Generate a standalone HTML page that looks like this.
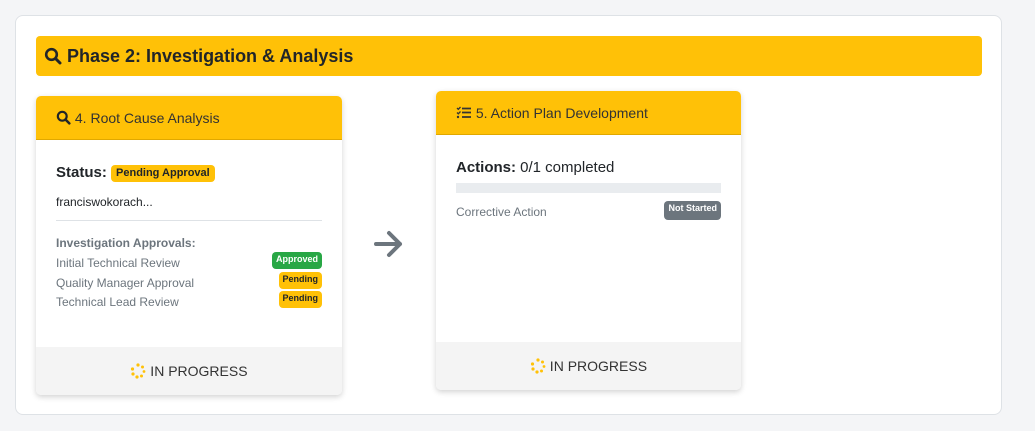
<!DOCTYPE html>
<html><head><style>
*{box-sizing:border-box;margin:0;padding:0}
body{width:1035px;height:431px;background:#f4f5f7;font-family:"Liberation Sans",sans-serif;color:#212529;position:relative;overflow:hidden}
.outer{position:absolute;left:15px;top:15px;width:987px;height:400px;background:#fff;border:1px solid #dee2e6;border-radius:8px}
.phase{position:absolute;left:36px;top:36px;width:946px;height:40px;background:#ffc107;border-radius:4px;font-weight:bold;font-size:18px;line-height:40px;padding-left:8px;color:#212529}
.card{position:absolute;background:#fff;border-radius:5px;box-shadow:0 2px 6px rgba(0,0,0,.18);overflow:hidden}
.hd{height:44px;background:#ffc107;font-size:14px;line-height:44px;padding-left:20px;color:#333;border-bottom:1px solid #e0a800}
.ft{position:absolute;left:0;right:0;bottom:0;height:48px;background:#f4f4f4;text-align:center;line-height:48px;font-size:14px;color:#333}
.badge{display:inline-block;border-radius:4px;font-weight:bold;font-size:10px;padding:2px 4px;color:#212529;background:#ffc107}
.row{position:absolute;left:20px;right:20px;font-size:12px;color:#6c757d}
.row .badge{position:absolute;right:0;top:-4px;font-size:9px;padding:2px 4px 5px}
.sp{vertical-align:-3px}
</style></head><body>
<div class="outer"></div>
<div class="phase"><svg width="18" height="18" viewBox="0 0 18 18" style="vertical-align:-3px"><circle cx="7.5" cy="7.5" r="5.3" fill="none" stroke="#212529" stroke-width="2.6"/><path d="M11.5 11.5L16 16" stroke="#212529" stroke-width="3" stroke-linecap="round"/></svg> Phase 2: Investigation &amp; Analysis</div>

<div class="card" style="left:36px;top:96px;width:306px;height:299px">
 <div class="hd"><svg width="15" height="15" viewBox="0 0 18 18" style="vertical-align:-2px"><circle cx="7.5" cy="7.5" r="5.3" fill="none" stroke="#212529" stroke-width="2.6"/><path d="M11.5 11.5L16 16" stroke="#212529" stroke-width="3" stroke-linecap="round"/></svg> 4. Root Cause Analysis</div>
 <div style="position:absolute;left:20px;top:68px;font-weight:bold;font-size:15px">Status: <span class="badge" style="font-size:11px;vertical-align:1px;padding:2px 5px 3px">Pending Approval</span></div>
 <div style="position:absolute;left:20px;top:99px;font-size:12px">franciswokorach...</div>
 <div style="position:absolute;left:20px;right:20px;top:124px;border-top:1px solid #dee2e6"></div>
 <div style="position:absolute;left:20px;top:140px;font-size:12px;font-weight:bold;color:#6c757d">Investigation Approvals:</div>
 <div class="row" style="top:160px">Initial Technical Review<span class="badge" style="background:#28a745;color:#fff">Approved</span></div>
 <div class="row" style="top:180px">Quality Manager Approval<span class="badge">Pending</span></div>
 <div class="row" style="top:199px">Technical Lead Review<span class="badge">Pending</span></div>
 <div class="ft"><svg class="sp" width="16" height="16" viewBox="0 0 16 16" fill="#ffc107"><circle cx="8" cy="2" r="1.6"/><circle cx="12.5" cy="4" r="1.5"/><circle cx="14" cy="8.5" r="1.4"/><circle cx="11.5" cy="13" r="1.5"/><circle cx="7" cy="14" r="1.6"/><circle cx="3" cy="11" r="1.6"/><circle cx="2.5" cy="6" r="1.6"/></svg> IN PROGRESS</div>
</div>

<svg style="position:absolute;left:374px;top:230px" width="30" height="28" viewBox="0 0 30 28"><path d="M2 14H26M15 3L26 14L15 25" fill="none" stroke="#6c757d" stroke-width="4" stroke-linecap="round" stroke-linejoin="round"/></svg>

<div class="card" style="left:436px;top:91px;width:305px;height:299px">
 <div class="hd"><svg width="16" height="13" viewBox="0 0 16 13" style="vertical-align:-1px"><path d="M1 2l1.3 1.3L4.5 1M1 6.5l1.3 1.3L4.5 5.5" fill="none" stroke="#333" stroke-width="1.3"/><circle cx="2" cy="11" r="1.2" fill="#333"/><path d="M6 2.5h9M6 6.5h9M6 11h9" stroke="#333" stroke-width="1.8"/></svg> 5. Action Plan Development</div>
 <div style="position:absolute;left:20px;top:68px;font-size:15px"><b>Actions:</b> 0/1 completed</div>
 <div style="position:absolute;left:20px;right:20px;top:92px;height:10px;background:#e9ecef"></div>
 <div class="row" style="top:114px">Corrective Action<span class="badge" style="background:#6c757d;color:#fff;padding:2px 4px 7px">Not Started</span></div>
 <div class="ft"><svg class="sp" width="16" height="16" viewBox="0 0 16 16" fill="#ffc107"><circle cx="8" cy="2" r="1.6"/><circle cx="12.5" cy="4" r="1.5"/><circle cx="14" cy="8.5" r="1.4"/><circle cx="11.5" cy="13" r="1.5"/><circle cx="7" cy="14" r="1.6"/><circle cx="3" cy="11" r="1.6"/><circle cx="2.5" cy="6" r="1.6"/></svg> IN PROGRESS</div>
</div>
</body></html>
